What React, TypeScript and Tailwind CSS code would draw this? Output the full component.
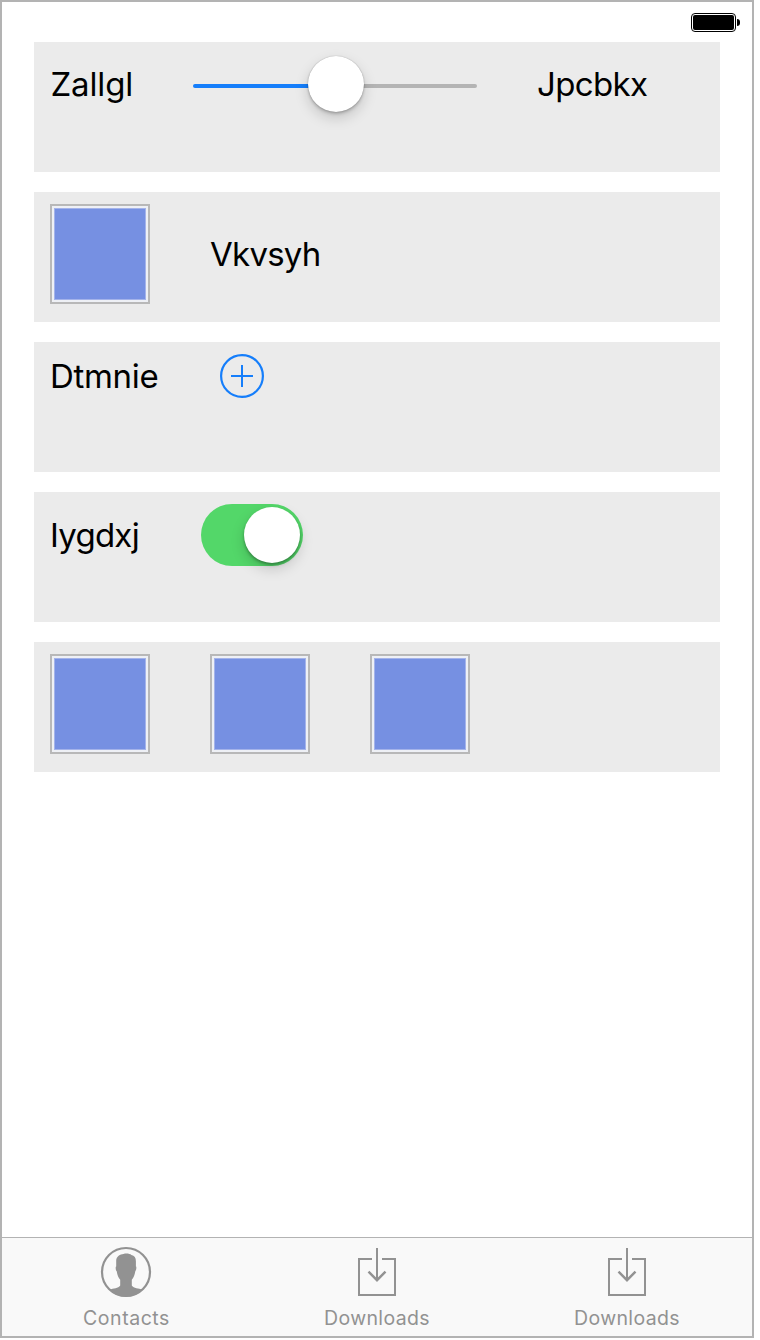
import type { ReactNode } from 'react';

function Label({ children, className }: { children: ReactNode; className: string }) {
  return <span className={`block shrink-0 whitespace-nowrap text-[33px] leading-10 text-black ${className}`}>{children}</span>;
}

function Row({ children }: { children?: ReactNode }) {
  return <section className="flex h-[130px] items-start bg-[#ebebeb] pl-4 pt-3">{children}</section>;
}

function ImageBox() {
  return (
    <div className="size-[100px] shrink-0 border-2 border-[#b8b8b8] bg-[#eef0f5] p-[2px]">
      <div className="size-full border border-[#a4b3ea] bg-[#7690e2]" />
    </div>
  );
}

function Battery() {
  return (
    <div className="flex items-center gap-px">
      <div className="h-[19px] w-[45px] rounded-[4px] border border-black bg-white p-px">
        <div className="size-full rounded-[2px] bg-black" />
      </div>
      <div className="h-[7px] w-[3px] rounded-r-[3px] bg-black" />
    </div>
  );
}

function Slider() {
  return (
    <div className="relative flex h-14 w-[284px] shrink-0 items-center pt-1">
      <div className="h-1 w-[142px] rounded-l-full bg-[#157efb]" />
      <div className="h-1 w-[142px] rounded-r-full bg-[#b4b4b4]" />
      <div className="absolute left-[115px] top-0 size-14 rounded-full bg-white shadow-[0_0_1px_rgba(0,0,0,0.35),0_2px_3px_rgba(0,0,0,0.2),0_6px_14px_rgba(0,0,0,0.17)]" />
    </div>
  );
}

function Switch() {
  return (
    <div className="flex h-[62px] w-[102px] shrink-0 justify-end rounded-full bg-[#53d769] p-[3px]">
      <div className="size-14 rounded-full bg-white shadow-[0_2px_3px_rgba(0,0,0,0.3),0_6px_14px_rgba(0,0,0,0.17)]" />
    </div>
  );
}

function ContactIcon() {
  return (
    <svg className="mr-[2px] block h-[52px] w-[52px]" viewBox="0 0 52 52">
      <circle cx="26" cy="26" r="24" fill="none" stroke="#929292" strokeWidth="2.2" />
      <path
        fill="#929292"
        d="M16.2 14.5C16.3 10.2 20.2 8.4 23.5 8C26.4 7.1 30 7.8 31.4 9C34.6 9.6 36 12 35.9 15.5V20.5C36.7 20.5 36.4 24.2 35.3 25.3C34.7 28.7 33.8 31.5 31.8 33.7V39.5C33.8 42.7 38.5 42 42.5 43.8C38.2 48.4 32.4 50.6 26 50.6S13.8 48.4 9.5 43.8C13.5 42 18.2 42.7 20.2 39.5V33.7C18.2 31.5 17.3 28.7 16.7 25.3C15.6 24.2 15.3 20.5 16.2 20.5Z"
      />
    </svg>
  );
}

function DownloadIcon() {
  return (
    <svg className="block h-[52px] w-[52px]" viewBox="0 0 52 52" fill="none" stroke="#929292" strokeWidth="2">
      <path d="M21 13H8V49H44V13H31M26 2V35" />
      <path d="M17.5 25.7L26 34.2L34.5 25.7" strokeWidth="2.4" />
    </svg>
  );
}

function Tab({ icon, children, className }: { icon: ReactNode; children: ReactNode; className: string }) {
  return (
    <div className="flex flex-1 flex-col items-center pt-2">
      {icon}
      <span className={`mt-2 block whitespace-nowrap text-[19.5px] leading-6 text-[#929292] ${className}`}>{children}</span>
    </div>
  );
}

export default function App() {
  return (
    <div className="h-[1340px] w-[760px] overflow-hidden bg-white font-['Inter',sans-serif]">
      <div className="flex h-[1338px] w-[754px] flex-col border-2 border-[#b3b3b3] bg-white">
        <header className="flex h-10 shrink-0 justify-end pr-3 pt-[11px]">
          <div className="h-[19px]">
            <Battery />
          </div>
        </header>
        <main className="flex flex-1 flex-col gap-5 pl-8 pr-8">
          <Row>
            <Label className="mt-[10px] w-[143px] pl-[0.5px] tracking-[-0.15px]">Zallgl</Label>
            <div className="mt-[2px]">
              <Slider />
            </div>
            <Label className="ml-[60px] mt-[10px] tracking-[-0.65px]">Jpcbkx</Label>
          </Row>
          <Row>
            <ImageBox />
            <Label className="ml-[60px] mt-[30px] tracking-[-0.75px]">Vkvsyh</Label>
          </Row>
          <Row>
            <Label className="mt-[2px] w-[170px] tracking-[-0.3px]">Dtmnie</Label>
            <svg className="size-11" viewBox="0 0 44 44" fill="none" stroke="#157efb" strokeWidth="2">
              <circle cx="22" cy="22" r="20.9" strokeWidth="2.2" />
              <path d="M22 11V33M11 22H33" />
            </svg>
          </Row>
          <Row>
            <Label className="mt-[11px] w-[151px] tracking-[-0.75px]">Iygdxj</Label>
            <Switch />
          </Row>
          <Row>
            <div className="flex gap-[60px]">
              <ImageBox />
              <ImageBox />
              <ImageBox />
            </div>
          </Row>
        </main>
        <nav className="flex h-[99px] shrink-0 border-t border-[#b3b3b3] bg-[#f9f9f9]">
          <Tab icon={<ContactIcon />} className="mr-[1px] tracking-[0.55px]">Contacts</Tab>
          <Tab icon={<DownloadIcon />} className="tracking-[0.37px]">Downloads</Tab>
          <Tab icon={<DownloadIcon />} className="tracking-[0.37px]">Downloads</Tab>
        </nav>
      </div>
    </div>
  );
}
